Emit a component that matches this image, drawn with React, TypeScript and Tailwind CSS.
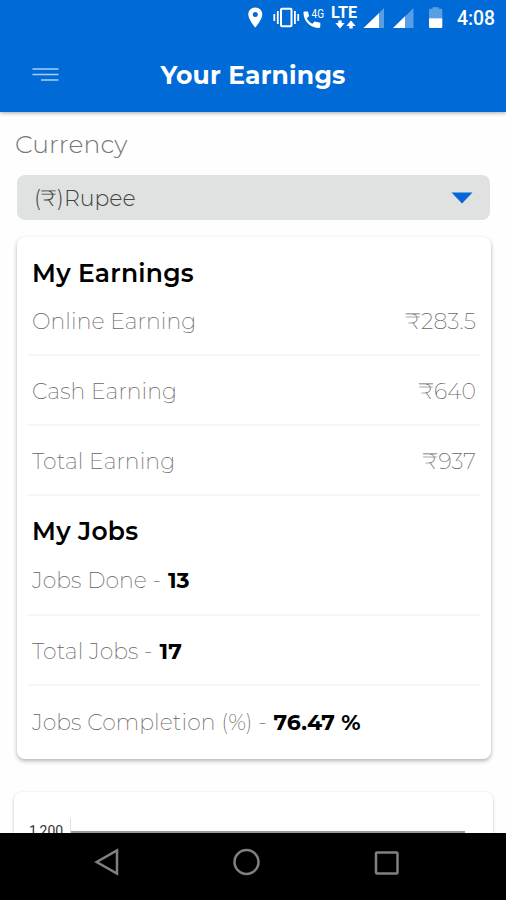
import { clsx } from "clsx";

const earnings = [
  { label: "Online Earning", value: "₹283.5" },
  { label: "Cash Earning", value: "₹640" },
  { label: "Total Earning", value: "₹937" },
];

const jobs = [
  { label: "Jobs Done -", value: "13" },
  { label: "Total Jobs -", value: "17" },
  { label: "Jobs Completion (%) -", value: "76.47 %" },
];

function StatusBar() {
  return (
    <div className="flex h-[37px] items-center justify-end pr-[11px] text-white">
      <svg width="251" height="37" viewBox="244 0 251 37" fill="currentColor">
        {/* Location */}
        <path
          fillRule="evenodd"
          d="M255.3 7.5c-4 0-7 3.1-7 7 0 5 7 13 7 13s7-8 7-13c0-3.900-3-7-7-7Zm0 4.600a2.500 2.500 0 1 1 0 5 2.500 2.500 0 0 1 0-5Z"
        />
        {/* Vibrate */}
        <rect x="281" y="8.800" width="10.500" height="17.400" rx="1" fill="none" stroke="currentColor" strokeWidth="2" />
        <path d="M277.800 11v13M274.300 14v7M294.900 11v13M298.200 14v7" stroke="currentColor" strokeWidth="1.800" />
        {/* Call over 4G */}
        <path d="M304.500 11.500h3.400l1.200 4.500-2.300 2.300c1.300 2.500 3 4.200 5.500 5.500l2.300-2.300 5.700 1.200v4.100c0 .7-.5 1.200-1.200 1.200-8.700 0-15.600-6.800-15.600-15.300 0-.7.3-1.200 1-1.200Z" />
        <text x="311.500" y="18" fontSize="13" fontFamily="Roboto, sans-serif" fontWeight="400" textLength="12.500" lengthAdjust="spacingAndGlyphs">
          4G
        </text>
        {/* LTE data */}
        <text x="331" y="18" fontSize="16" fontFamily="Roboto, sans-serif" fontWeight="700" textLength="26" lengthAdjust="spacingAndGlyphs">
          LTE
        </text>
        <path d="M338.300 20.500h3.400v2.500h3l-4.700 5.500-4.700-5.500h3ZM349.300 28.500h3.400V26h3l-4.700-5.500-4.700 5.500h3Z" />
        {/* Signal strength */}
        <path d="M384 8v20h-20Z" opacity=".35" />
        <path d="M379 13.200V28h-15.500Z" />
        <path d="M413.500 8v20h-20Z" opacity=".35" />
        <path d="M405 16.300V28h-12Z" />
        {/* Battery */}
        <path d="M429 10q0-1.200 1.200-1.200h2.300V7.200h6.300v1.600h2.300q1.200 0 1.200 1.200v8.300H429Z" opacity=".35" />
        <path d="M429 18.300h13.300v8.500q0 1.200-1.200 1.200h-10.900q-1.200 0-1.200-1.200Z" />
        <text x="457" y="25" fontSize="20" fontFamily="Roboto, sans-serif" fontWeight="500" textLength="38" lengthAdjust="spacingAndGlyphs">
          4:08
        </text>
      </svg>
    </div>
  );
}

function Header() {
  return (
    <header className="relative z-10 h-[112px] shrink-0 bg-[#006ad6] shadow-[0_1px_4px_rgba(0,0,0,0.35)]">
      <StatusBar />
      <div className="grid h-[75px] grid-cols-[1fr_auto_1fr] items-center">
        <button className="ml-8 w-[27px]" aria-label="Menu">
          <svg width="27" height="16" viewBox="0 0 27 16" stroke="#a6d0fa" strokeWidth="1.600">
            <path d="M0.500 2h26M0.500 7.500h26M9 13h17.500" />
          </svg>
        </button>
        <h1 className="text-[25px] leading-8 font-bold tracking-[0.2px] text-white">Your Earnings</h1>
      </div>
    </header>
  );
}

function NavigationBar() {
  return (
    <nav className="relative z-10 h-[67px] shrink-0 bg-black">
      <svg width="506" height="67" viewBox="0 833 506 67" fill="none" stroke="#808080" strokeWidth="2.500">
        <path d="M117 850.500v23L96.700 862Z" />
        <circle cx="246.500" cy="862" r="12" />
        <rect x="376" y="852.500" width="21.500" height="21" rx="1" />
      </svg>
    </nav>
  );
}

export default function App() {
  return (
    <div className="flex h-[900px] w-[506px] flex-col overflow-hidden bg-[#fefefe] font-[Montserrat,Inter,sans-serif]">
      <Header />

      <main className="flex min-h-0 flex-1 flex-col overflow-hidden">
        <h2 className="mt-4 ml-[15px] text-[25px] leading-8 font-light tracking-[0.1px] text-[#777]">Currency</h2>
        <button className="mt-[15px] ml-[17px] flex h-[45px] w-[473px] shrink-0 items-center justify-between rounded-lg bg-[#dfe2e1] px-[17px]">
          <span className="pt-px text-[22px] font-light text-[#444]">(₹)Rupee</span>
          <svg width="22" height="12" viewBox="0 0 22 12" fill="#0567d7">
            <path d="M0.500 0.500h21L11 11.500Z" />
          </svg>
        </button>

        <section className="mt-[17px] ml-[17px] h-[522px] w-[474px] shrink-0 rounded-lg bg-white px-[11px] pt-[17px] shadow-[0_2px_4px_rgba(0,0,0,0.3)]">
          <h3 className="h-[34px] pl-1 text-[25px] leading-[38px] font-semibold tracking-[0.25px] text-black">My Earnings</h3>
          {earnings.map((row, index) => (
            <div
              key={row.label}
              className={clsx(
                "flex items-center justify-between border-b-2 border-[#f5f5f5] px-1 text-[22px] font-extralight tracking-[0.08px] text-[#666]",
                index === 0 ? "h-[68px] pt-px" : "h-[70px] pt-[2px]"
              )}
            >
              <span>{row.label}</span>
              <span>{row.value}</span>
            </div>
          ))}
          <h3 className="mt-[17px] h-[32px] pl-1 text-[25px] leading-[36px] font-semibold tracking-[0.25px] text-black">My Jobs</h3>
          {jobs.map((row, index) => (
            <div
              key={row.label}
              className={clsx(
                "flex items-center gap-[7px] pl-1 text-[22px] font-extralight tracking-[0.06px] text-[#666]",
                index === 0 ? "h-[71px] pt-[2px]" : "h-[70px] pt-[3px]",
                index < jobs.length - 1 && "border-b-2 border-[#f5f5f5]"
              )}
            >
              <span>{row.label}</span>
              <strong className="font-bold text-black">{row.value}</strong>
            </div>
          ))}
        </section>

        <section className="mt-[33px] ml-[14px] h-[300px] w-[479px] shrink-0 rounded-lg bg-white shadow-[0_1px_3px_rgba(0,0,0,0.25)]">
          <div className="flex pt-[26px] pl-[15px]">
            <span className="h-6 w-[41px] pt-[5px] font-[Roboto,sans-serif] text-[14px] leading-4 text-[#333]">1,200</span>
            <div className="h-40 w-[395px] border-l border-[#ddd] pt-[13px]">
              <div className="border-t-2 border-[#999]" />
            </div>
          </div>
        </section>
      </main>

      <NavigationBar />
    </div>
  );
}
